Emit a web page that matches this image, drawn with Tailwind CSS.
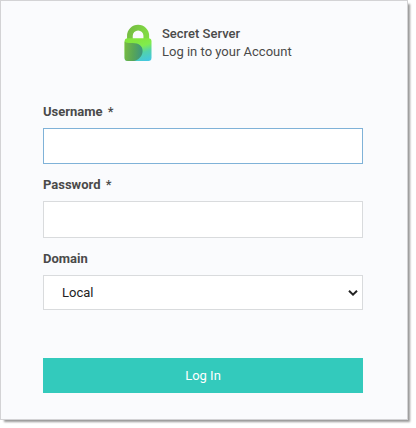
<!DOCTYPE html>
<html lang="en">
<head>
<meta charset="utf-8">
<title>Secret Server</title>
<script src="https://cdn.jsdelivr.net/npm/@tailwindcss/browser@4"></script>
</head>
<body class="h-[428px] w-[416px] overflow-hidden bg-white font-[Roboto,sans-serif] text-[13px] leading-[18px] text-[#4a4a4a]">
<main class="flex h-[420px] w-[408px] flex-col border border-[#d3d3d5] bg-[#fafbfd] pr-[44px] pl-[42px] shadow-[3px_3px_2px_-1px_#999]">
  <header class="mt-[23px] ml-[81px] flex h-[39px] items-start">
    <svg class="h-[38px] w-[28px] shrink-0" viewBox="0 0 28 38" fill="none">
      <defs>
        <linearGradient id="ring" x1="0" y1="0" x2="1" y2=".3"><stop stop-color="#76bd43"/><stop offset="1" stop-color="#80d943"/></linearGradient>
        <linearGradient id="body" x1=".45" y1=".1" x2=".8" y2="1"><stop stop-color="#83e63f"/><stop offset=".3" stop-color="#80ec4e"/><stop offset=".6" stop-color="#52d2ac"/><stop offset="1" stop-color="#43c7e0"/></linearGradient>
        <linearGradient id="wave" x1="0" y1=".4" x2="1" y2=".5"><stop stop-color="#76b944"/><stop offset=".5" stop-color="#58a657"/><stop offset="1" stop-color="#3b9580"/></linearGradient>
      </defs>
      <path d="M5.900 17v-5.200a8.200 8.200 0 0 1 16.400 0V17" stroke="url(#ring)" stroke-width="5.700"/>
      <rect x=".6" y="14.300" width="26.900" height="22.700" rx="3.200" fill="url(#body)"/>
      <path d="M.6 17.500c1.500 1.500 3.500 1.500 8 1.500 6.500 0 10.200 3.200 10 8.200-.2 5-4 8.600-8.500 9.800H3.800a3.200 3.200 0 0 1-3.200-3.200z" fill="url(#wave)"/>
    </svg>
    <div class="mt-px ml-[10px]">
      <p class="font-medium">Secret Server</p>
      <p>Log in to your Account</p>
    </div>
  </header>
  <form class="mt-[40px] flex flex-col">
    <label for="user" class="h-[25px] font-bold">Username <span class="ml-[2px] font-medium">*</span></label>
    <input id="user" type="text" class="h-[36px] w-[320px] border border-[#7fb2d8] bg-white px-[18px] outline-none">
    <label for="pass" class="mt-[12px] h-[25px] font-bold">Password <span class="ml-[2px] font-medium">*</span></label>
    <input id="pass" type="password" class="h-[37px] w-[320px] border border-[#d9dbdd] bg-white px-[18px] outline-none">
    <label for="domain" class="mt-[12px] h-[25px] font-bold">Domain</label>
    <div class="grid h-[35px] w-[320px] items-center border border-[#d9dbdd] bg-white">
      <select id="domain" class="col-start-1 row-start-1 h-[33px] w-full appearance-none pl-[18px] text-[#222] outline-none"><option>Local</option></select>
      <svg class="pointer-events-none col-start-1 row-start-1 mr-[4px] h-[6px] w-[10px] justify-self-end" viewBox="0 0 10 6" fill="none"><path d="M1 .8 5 4.600 9 .8" stroke="#222" stroke-width="2"/></svg>
    </div>
    <button type="button" class="mt-[48px] h-[35px] w-[320px] bg-[#33cabc] text-white">Log In</button>
  </form>
</main>
</body>
</html>
